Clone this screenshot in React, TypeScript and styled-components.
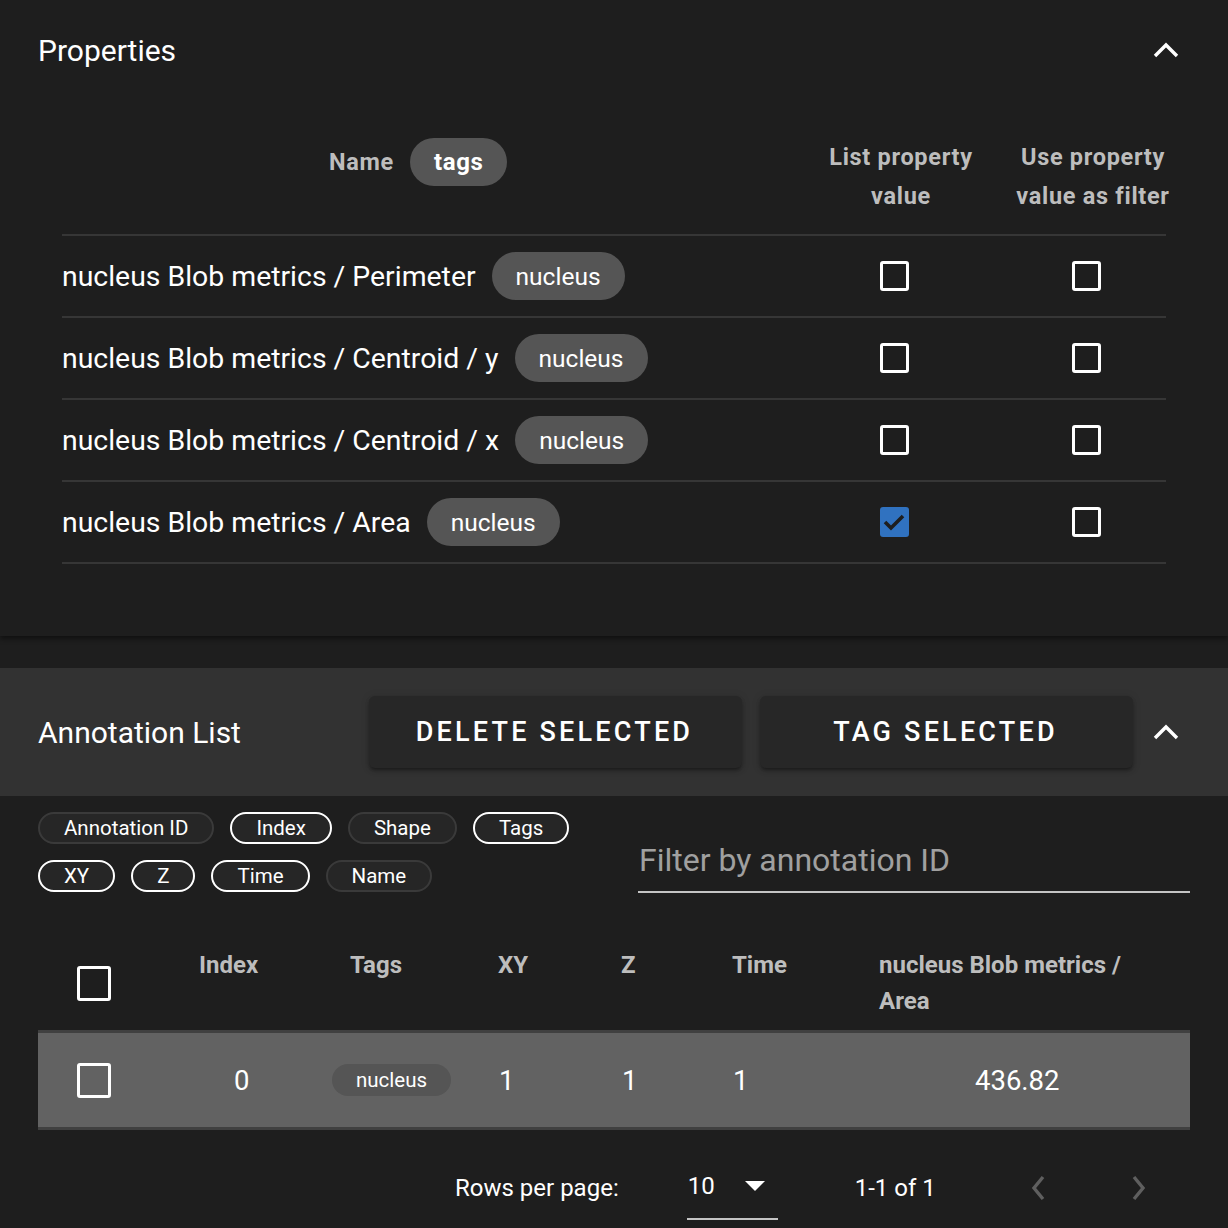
import {FC} from "react";
import styled, {createGlobalStyle} from "styled-components";

const GlobalStyle = createGlobalStyle`
  html, body {
    margin: 0;
    padding: 0;
    background: #1e1e1e;
    color: #ffffff;
    font-family: Roboto, "Liberation Sans", sans-serif;
  }
  * {
    box-sizing: border-box;
  }
`

const Page = styled.div`
  width: 1228px;
  height: 1228px;
  overflow: hidden;
  background: #1e1e1e;
`

const PropertiesPanel = styled.section`
  position: relative;
  z-index: 1;
  background: #1e1e1e;
  padding-bottom: 72px;
  box-shadow: 0 3px 5px rgba(0, 0, 0, 0.45);
`

const PanelHeader = styled.div`
  height: 100px;
  padding: 0 39px 0 38px;
  display: flex;
  align-items: center;
  justify-content: space-between;
`

const PanelTitle = styled.h2`
  margin: 0;
  font-size: 30px;
  font-weight: 400;
  color: #ffffff;
`

const ChevronBox = styled.div`
  width: 46px;
  height: 46px;
  display: flex;
  align-items: center;
  justify-content: center;
`

const PropTable = styled.div`
  margin: 0 62px;
`

const PropRow = styled.div<{ $head?: boolean }>`
  display: grid;
  grid-template-columns: 1fr 192px 169px;
  align-items: ${p => p.$head ? "start" : "center"};
  height: ${p => p.$head ? "136px" : "82px"};
  padding-top: ${p => p.$head ? "38px" : "0"};
  border-bottom: 2px solid #363636;
`

const HeadCell = styled.div<{ $offset?: number }>`
  width: ${p => p.$offset ? "auto" : "192px"};
  display: flex;
  align-items: center;
  justify-content: ${p => p.$offset ? "flex-start" : "center"};
  padding-left: ${p => p.$offset || 0}px;
  gap: 16px;
  font-size: 23.5px;
  font-weight: 700;
  line-height: 39px;
  letter-spacing: 0.7px;
  text-align: center;
  color: #bdbdbd;
  white-space: nowrap;
`

const NameCell = styled.div`
  display: flex;
  align-items: center;
  gap: 16px;
  font-size: 28.4px;
  color: #ffffff;
`

const CheckCell = styled.div`
  width: 192px;
  display: flex;
  justify-content: center;
  padding-right: 14px;
`

const Chip = styled.span<{ $size?: "lg" | "sm"; $bold?: boolean }>`
  display: inline-flex;
  align-items: center;
  height: ${p => p.$size === "sm" ? "32px" : "48px"};
  padding: 0 24px;
  border-radius: 24px;
  background: #555555;
  color: #ffffff;
  font-size: ${p => p.$size === "sm" ? "20.5px" : p.$bold ? "24px" : "24.5px"};
  font-weight: ${p => p.$bold ? 700 : 400};
  letter-spacing: ${p => p.$bold ? "0.6px" : "0"};
  white-space: nowrap;
`

const Box = styled.span<{ $checked?: boolean; $size?: number }>`
  display: inline-flex;
  align-items: center;
  justify-content: center;
  width: ${p => p.$size || 29}px;
  height: ${p => (p.$size || 29) + 1}px;
  border-radius: 3px;
  border: ${p => p.$checked ? "none" : "3px solid #ffffff"};
  background: ${p => p.$checked ? "#3072c0" : "transparent"};
`

const Gap = styled.div`
  height: 32px;
  background: #1e1e1e;
`

const ListHeader = styled.div`
  height: 128px;
  background: #323232;
  padding: 0 39px 0 38px;
  display: flex;
  align-items: center;
`

const Buttons = styled.div`
  margin-left: auto;
  display: flex;
  gap: 18px;
  margin-right: 10px;
`

const ActionButton = styled.button`
  width: 373px;
  height: 72px;
  border: none;
  border-radius: 6px;
  background: #272727;
  color: #ffffff;
  font-family: Roboto, "Liberation Sans", sans-serif;
  font-size: 27px;
  font-weight: 500;
  letter-spacing: 3.2px;
  text-transform: uppercase;
  padding-left: 4px;
  box-shadow: 0 3px 3px -2px rgba(0, 0, 0, 0.3), 0 3px 4px rgba(0, 0, 0, 0.2), 0 1px 8px rgba(0, 0, 0, 0.15);
`

const ListBody = styled.div`
  padding: 16px 38px 0;
`

const Toolbar = styled.div`
  display: flex;
  align-items: flex-start;
  justify-content: space-between;
`

const ChipGroup = styled.div`
  display: flex;
  flex-direction: column;
  gap: 16px;
`

const ChipLine = styled.div`
  display: flex;
  gap: 16px;
`

const ToggleChip = styled.span<{ $on?: boolean }>`
  display: inline-flex;
  align-items: center;
  justify-content: center;
  height: 32px;
  padding: 0 24px;
  border-radius: 16px;
  border: 2px solid ${p => p.$on ? "#ffffff" : "#3a3a3a"};
  background: #262626;
  font-size: 20.5px;
  color: #ffffff;
  white-space: nowrap;
`

const FilterField = styled.div`
  width: 552px;
  margin-top: 22px;
  height: 59px;
  border-bottom: 2px solid #c4c4c4;
  font-size: 32px;
  color: #a0a0a0;
  padding-left: 1px;
  line-height: 52px;
`

const Table = styled.div`
  margin-top: 50px;
`

const TableRow = styled.div<{ $head?: boolean }>`
  display: grid;
  grid-template-columns: 137px 151px 152px 122px 112px 143px 1fr;
  align-items: ${p => p.$head ? "start" : "center"};
  height: ${p => p.$head ? "90px" : "97px"};
  background: ${p => p.$head ? "transparent" : "#626262"};
  border-bottom: 3px solid #404040;
`

const TH = styled.div<{ $pad: number }>`
  padding-left: ${p => p.$pad}px;
  padding-right: 50px;
  padding-top: 4px;
  font-size: 24px;
  font-weight: 700;
  line-height: 36px;
  color: #bdbdbd;
`

const TD = styled.div<{ $pad: number }>`
  padding-left: ${p => p.$pad}px;
  font-size: 27.5px;
  color: #ffffff;
  display: flex;
  align-items: center;
`

const Pager = styled.div`
  display: flex;
  align-items: center;
  height: 116px;
  padding-left: 417px;
  font-size: 24px;
  color: #ffffff;
`

const PageSelect = styled.div`
  margin-left: 68px;
  margin-top: -2px;
  width: 91px;
  height: 66px;
  display: flex;
  align-items: center;
  gap: 30px;
  padding-left: 1px;
  border-bottom: 2px solid #c4c4c4;
`

const PageRange = styled.span`
  margin-left: 77px;
`

const PageNav = styled.div`
  margin-left: 93px;
  display: flex;
  gap: 83px;
`

const ChevronUp: FC = () => (
    <svg width="26" height="16" viewBox="0 0 26 16">
        <path d="M2 14 L13 3 L24 14" fill="none" stroke="#ffffff" strokeWidth="3.4"/>
    </svg>
)

const Chevron: FC<{ dir: "left" | "right" }> = ({dir}) => (
    <svg width="18" height="28" viewBox="0 0 18 28">
        <path d={dir === "left" ? "M14 3 L5 14 L14 25" : "M4 3 L13 14 L4 25"} fill="none" stroke="#5f5f5f" strokeWidth="3.4"/>
    </svg>
)

const Checkbox: FC<{ checked?: boolean; size?: number }> = ({checked, size}) => (
    <Box $checked={checked} $size={size}>
        {checked && (
            <svg width="24" height="20" viewBox="0 0 24 20">
                <path d="M3 10 L9 16 L21 4" fill="none" stroke="#1e1e1e" strokeWidth="3.6"/>
            </svg>
        )}
    </Box>
)

const properties = [
    {name: "nucleus Blob metrics / Perimeter", list: false},
    {name: "nucleus Blob metrics / Centroid / y", list: false},
    {name: "nucleus Blob metrics / Centroid / x", list: false},
    {name: "nucleus Blob metrics / Area", list: true},
]

const chipLines = [
    [{label: "Annotation ID", on: false}, {label: "Index", on: true}, {label: "Shape", on: false}, {label: "Tags", on: true}],
    [{label: "XY", on: true}, {label: "Z", on: true}, {label: "Time", on: true}, {label: "Name", on: false}],
]

const columns = [
    {title: "Index", headPad: 24, cellPad: 59},
    {title: "Tags", headPad: 24, cellPad: 6},
    {title: "XY", headPad: 20, cellPad: 21},
    {title: "Z", headPad: 21, cellPad: 22},
    {title: "Time", headPad: 20, cellPad: 21},
    {title: "nucleus Blob metrics / Area", headPad: 24, cellPad: 120},
]

const App: FC = () => {
    const row = ["0", "nucleus", "1", "1", "1", "436.82"]

    return (
        <Page>
            <GlobalStyle/>
            <PropertiesPanel>
                <PanelHeader>
                    <PanelTitle>Properties</PanelTitle>
                    <ChevronBox><ChevronUp/></ChevronBox>
                </PanelHeader>
                <PropTable>
                    <PropRow $head>
                        <HeadCell $offset={267}>
                            Name
                            <Chip $bold>tags</Chip>
                        </HeadCell>
                        <HeadCell>List property<br/>value</HeadCell>
                        <HeadCell>Use property<br/>value as filter</HeadCell>
                    </PropRow>
                    {properties.map((p) => (
                        <PropRow key={p.name}>
                            <NameCell>
                                {p.name}
                                <Chip>nucleus</Chip>
                            </NameCell>
                            <CheckCell><Checkbox checked={p.list}/></CheckCell>
                            <CheckCell><Checkbox/></CheckCell>
                        </PropRow>
                    ))}
                </PropTable>
            </PropertiesPanel>
            <Gap/>
            <ListHeader>
                <PanelTitle>Annotation List</PanelTitle>
                <Buttons>
                    <ActionButton>Delete selected</ActionButton>
                    <ActionButton>Tag selected</ActionButton>
                </Buttons>
                <ChevronBox><ChevronUp/></ChevronBox>
            </ListHeader>
            <ListBody>
                <Toolbar>
                    <ChipGroup>
                        {chipLines.map((line, i) => (
                            <ChipLine key={i}>
                                {line.map((c) => (
                                    <ToggleChip key={c.label} $on={c.on}>{c.label}</ToggleChip>
                                ))}
                            </ChipLine>
                        ))}
                    </ChipGroup>
                    <FilterField>Filter by annotation ID</FilterField>
                </Toolbar>
                <Table>
                    <TableRow $head>
                        <TD $pad={39} style={{paddingTop: 23}}><Checkbox size={34}/></TD>
                        {columns.map((c) => (
                            <TH key={c.title} $pad={c.headPad}>{c.title}</TH>
                        ))}
                    </TableRow>
                    <TableRow>
                        <TD $pad={39}><Checkbox size={34}/></TD>
                        {columns.map((c, i) => (
                            <TD key={c.title} $pad={c.cellPad}>
                                {i === 1 ? <Chip $size="sm">{row[i]}</Chip> : row[i]}
                            </TD>
                        ))}
                    </TableRow>
                </Table>
                <Pager>
                    <span>Rows per page:</span>
                    <PageSelect>
                        <span>10</span>
                        <svg width="20" height="10" viewBox="0 0 20 10">
                            <path d="M0 0 L20 0 L10 10 Z" fill="#ffffff"/>
                        </svg>
                    </PageSelect>
                    <PageRange>1-1 of 1</PageRange>
                    <PageNav>
                        <Chevron dir="left"/>
                        <Chevron dir="right"/>
                    </PageNav>
                </Pager>
            </ListBody>
        </Page>
    )
}

export default App
